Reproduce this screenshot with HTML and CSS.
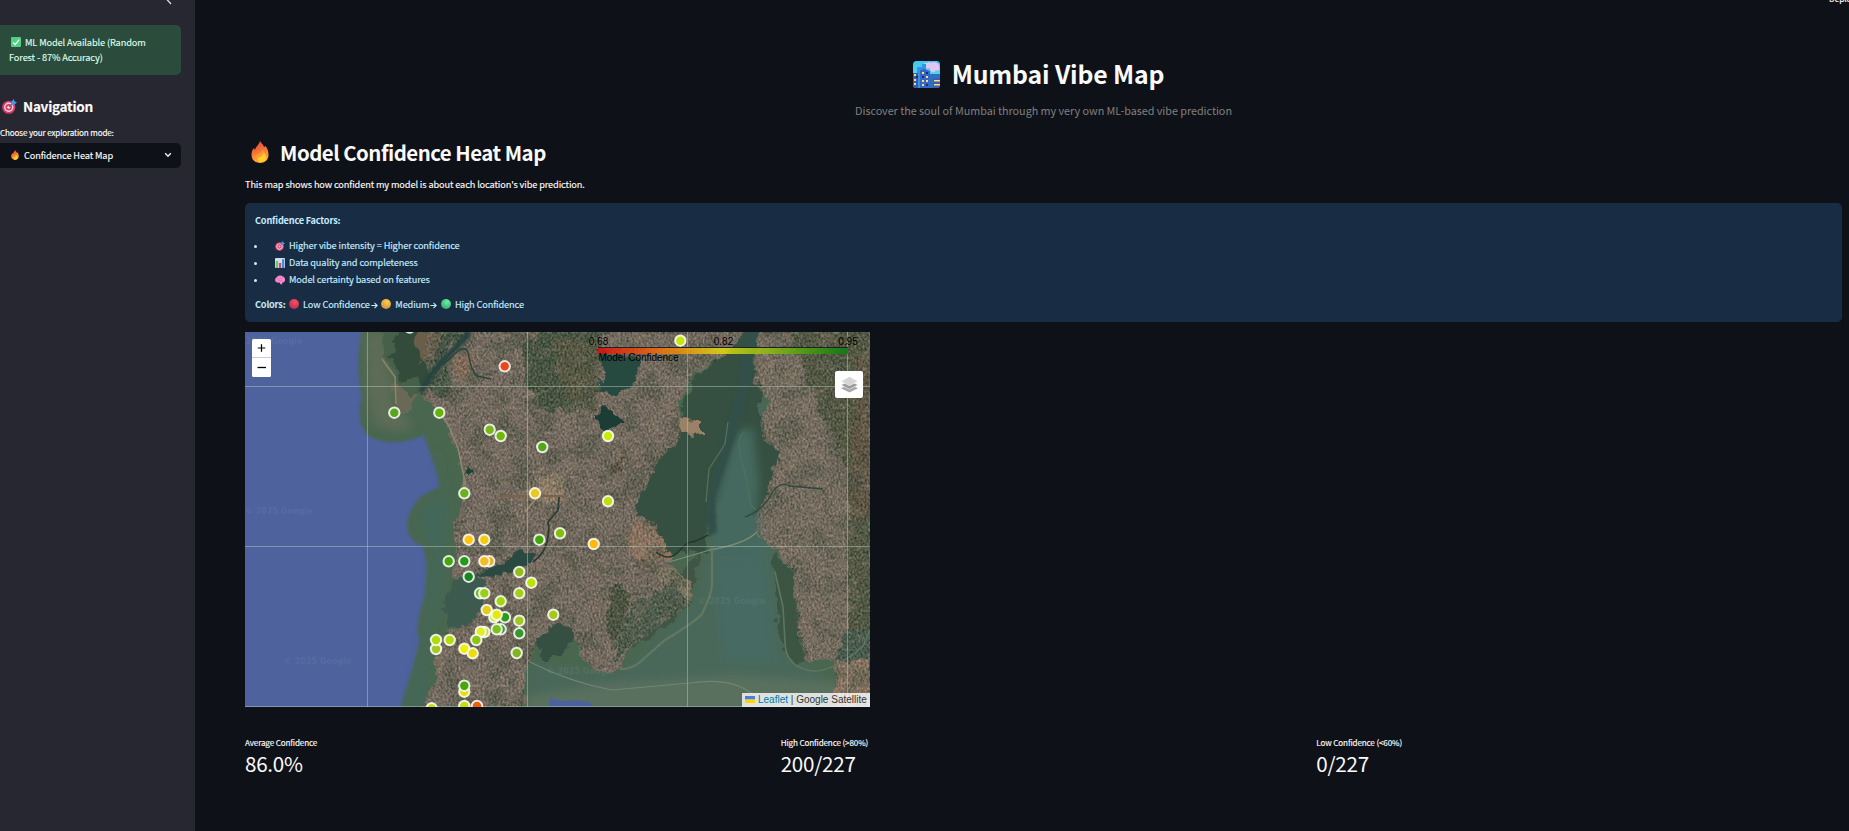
FILE: index.html
```html
<!DOCTYPE html>
<html lang="en">
<head>
<meta charset="utf-8">
<title>Mumbai Vibe Map</title>
<link rel="stylesheet" href="styles.css">
</head>
<body>
<svg class="defs" width="0" height="0" aria-hidden="true">
  <defs>
    <linearGradient id="flameFill" x1="0" y1="0" x2=".3" y2="1"><stop offset="0" stop-color="#d9473d"/><stop offset=".45" stop-color="#f2693a"/><stop offset="1" stop-color="#ffb033"/></linearGradient>
    <linearGradient id="skyFill" x1="0" y1="0" x2="0" y2="1"><stop offset="0" stop-color="#3fc8ee"/><stop offset="1" stop-color="#7ad6f5"/></linearGradient>
    <radialGradient id="redBall" cx=".6" cy=".3" r=".8"><stop offset="0" stop-color="#f5506a"/><stop offset="1" stop-color="#b82a45"/></radialGradient>
    <radialGradient id="yellowBall" cx=".6" cy=".3" r=".8"><stop offset="0" stop-color="#ffd04a"/><stop offset="1" stop-color="#c88a3c"/></radialGradient>
    <radialGradient id="greenBall" cx=".6" cy=".3" r=".8"><stop offset="0" stop-color="#6af0a0"/><stop offset="1" stop-color="#35a070"/></radialGradient>
    <symbol id="flame" viewBox="0 0 18 22"><path d="M9 0c1 2 3 3 4 6l1.500-1c2.500 3 3 6 3 9 0 5-4 8-8.500 8S.5 19 .5 14c0-3 .5-5 2.500-7l1 2C5 5 8 4 9 0z" fill="url(#flameFill)"/><path d="M12 8c0 3 3 4 3 8 0 4-3 5-6 5s-5-2-5-4c0-4 7-4 8-9z" fill="#ff9a2e"/><path d="M13 11c0 2 2 3 2 5.500 0 3-2.500 4.500-5 4.500s-4-1.500-3.500-3.500C8 16 12 15 13 11z" fill="#ffcf2f"/></symbol>
    <symbol id="target" viewBox="0 0 16 16"><circle cx="7.2" cy="8.8" r="7" fill="#d93a66"/><circle cx="7.2" cy="8.8" r="5" fill="#f3d9e4"/><circle cx="7.2" cy="8.8" r="3.5" fill="#d93a66"/><circle cx="7.2" cy="8.8" r="1.7" fill="#f3d9e4"/><path d="M7.5 8.5L12 4" stroke="#3b6ea8" stroke-width="1.1"/><path d="M10 5.8V3l2.4-3 1 2.3L16 3.600 13 6z" fill="#3f9ae8"/></symbol>
    <symbol id="chart" viewBox="0 0 10 10"><rect width="10" height="10" rx="1" fill="#d8dce8"/><rect x=".8" y="3" width="2.3" height="7" fill="#6cc46a"/><rect x="3.900" y="5" width="2.300" height="5" fill="#d9407a"/><rect x="7" y="1.200" width="2.300" height="8.800" fill="#3b8de0"/></symbol>
    <symbol id="brain" viewBox="0 0 10 9"><path d="M2 1.500C3.500-.2 6.500-.3 8 1c1.700.8 2.300 2.600 2 4-.3 1.500-1.500 2-2.500 2L6.800 9 5.200 8.500 4.800 7C3 7.500.8 7 .3 5.500-.2 4 .3 2.300 2 1.500z" fill="#f986c8"/><path d="M2 3.500c1-.6 2 .3 2.500 0M5 2c1 0 1.500.7 2.500.5M3 5.500c1.300-.8 2.500.4 4-.6" stroke="#e062b0" stroke-width=".5" fill="none"/></symbol>
    <symbol id="layers" viewBox="0 0 16 16"><path d="M8 7.500l8 4-8 4-8-4z" fill="#a8a8a8"/><path d="M8 4.500l8 4-8 4-8-4z" fill="#9a9a9a" stroke="#fff" stroke-width=".5"/><path d="M8 .5l8 4.500-8 4.200L0 5z" fill="#d6d6d6" stroke="#fff" stroke-width=".5"/></symbol>
  </defs>
</svg>
<div class="app">
  <aside class="sidebar">
    <svg class="collapse" viewBox="0 0 8 8"><path d="M1.500 -1L6 4" /></svg>
    <div class="status"><svg class="check" viewBox="0 0 10 10"><rect width="10" height="10" rx="1" fill="#4fd083"/><path d="M2 5.300L4.200 7.500 8.200 2.700" fill="none" stroke="#fff" stroke-width="1.200"/></svg>ML Model Available (Random<br>Forest - 87% Accuracy)</div>
    <h3 class="nav-title"><svg class="nav-icon"><use href="#target"/></svg>Navigation</h3>
    <label class="mode-label">Choose your exploration mode:</label>
    <div class="select"><svg class="select-flame"><use href="#flame"/></svg><span>Confidence Heat Map</span><svg class="caret" viewBox="0 0 8 6"><path d="M1.200 1.200L4 4.200 6.800 1.200"/></svg></div>
  </aside>
  <main class="content">
    <div class="deploy">Deploy</div>
    <h1 class="title"><svg class="city" viewBox="0 0 27 27"><defs><clipPath id="cityClip"><rect width="27" height="27" rx="3.500"/></clipPath></defs><g clip-path="url(#cityClip)"><rect width="27" height="27" fill="url(#skyFill)"/><path d="M11 4a2 2 0 0 1 3-2 3 3 0 0 1 4 0 5 4 0 0 1 8 4 2 2 0 0 1-3 3 3 3 0 0 1-6-2 4 3 0 0 1-6-3z" fill="#dcc8f2"/><path d="M4 6h5V3h4v24H4z" fill="#2e97e0"/><path d="M16 13h11v14H16z" fill="#2c72b8"/><path d="M0 12h5v15H0z" fill="#3d55b8"/><path d="M7 9l4-1 6 2v17H7z" fill="#3566cc"/><path d="M20 17h7v10h-7z" fill="#4159be"/><path d="M1 13h2v2H1zM1 18h2v2H1zM1 22h2v2H1zM9 11h2v2H9zM13 15h2v2h-2zM9 19h2v2H9zM13 19h2v2h-2zM9 23h2v2H9zM21 19h6v1.500h-6zM21 23h6v1.500h-6z" fill="#f8df6e"/><path d="M13 11h2v2h-2zM9 15h2v2H9zM13 23h2v2h-2zM3 15h2v2H3z" fill="#1e2d62"/></g></svg>Mumbai Vibe Map</h1>
    <p class="subtitle">Discover the soul of Mumbai through my very own ML-based vibe prediction</p>
    <h2 class="heading"><svg class="heading-icon"><use href="#flame"/></svg>Model Confidence Heat Map</h2>
    <p class="intro">This map shows how confident my model is about each location's vibe prediction.</p>
    <section class="info">
      <p><b>Confidence Factors:</b></p>
      <ul>
        <li><svg class="emoji"><use href="#target"/></svg>Higher vibe intensity = Higher confidence</li>
        <li><svg class="emoji"><use href="#chart"/></svg>Data quality and completeness</li>
        <li><svg class="emoji"><use href="#brain"/></svg>Model certainty based on features</li>
      </ul>
      <p class="scale"><b>Colors:</b><svg class="ball" viewBox="0 0 10 10"><circle cx="5" cy="5" r="5" fill="url(#redBall)"/></svg><span>Low Confidence</span><svg class="arrow" viewBox="0 0 6 6"><path d="M.3 3H5.300M3 .8L5.300 3 3 5.200"/></svg><svg class="ball" viewBox="0 0 10 10"><circle cx="5" cy="5" r="5" fill="url(#yellowBall)"/></svg><span>Medium</span><svg class="arrow" viewBox="0 0 6 6"><path d="M.3 3H5.300M3 .8L5.300 3 3 5.200"/></svg><svg class="ball" viewBox="0 0 10 10"><circle cx="5" cy="5" r="5" fill="url(#greenBall)"/></svg><span>High Confidence</span></p>
    </section>
    <div class="map">
      <svg class="tiles" viewBox="0 0 625 375">
        <defs>
          <filter id="rough" x="-5%" y="-5%" width="110%" height="110%"><feTurbulence type="fractalNoise" baseFrequency=".09" numOctaves="4" seed="4"/><feDisplacementMap in="SourceGraphic" scale="14" xChannelSelector="R" yChannelSelector="G"/><feGaussianBlur stdDeviation=".7"/></filter>
          <filter id="soft"><feGaussianBlur stdDeviation="1.500"/></filter>
          <filter id="softer" x="-30%" y="-30%" width="160%" height="160%"><feGaussianBlur stdDeviation="5"/></filter>
          <filter id="speckle" x="0" y="0" width="100%" height="100%" color-interpolation-filters="sRGB"><feTurbulence type="fractalNoise" baseFrequency=".5 .36" numOctaves="4" seed="8"/><feColorMatrix values="1 .6 0 0 -.36  1 .6 0 0 -.38  1 .6 0 0 -.43  0 0 0 0 .33"/><feComposite in2="SourceGraphic" operator="in"/></filter>
          <filter id="patches" x="0" y="0" width="100%" height="100%" color-interpolation-filters="sRGB"><feTurbulence type="fractalNoise" baseFrequency=".045" numOctaves="6" seed="21"/><feColorMatrix values="0 0 0 0 .23  0 0 0 0 .29  0 0 0 0 .22  5 0 0 0 -2.3"/><feComposite in2="SourceGraphic" operator="in"/></filter>
          <filter id="pale" x="0" y="0" width="100%" height="100%" color-interpolation-filters="sRGB"><feTurbulence type="fractalNoise" baseFrequency=".07" numOctaves="5" seed="5"/><feColorMatrix values="0 0 0 0 .62  0 0 0 0 .54  0 0 0 0 .46  0 6 0 0 -3.2"/><feComposite in2="SourceGraphic" operator="in"/></filter>
          <linearGradient id="legend"><stop offset="0" stop-color="#d80c0c"/><stop offset=".25" stop-color="#f0700a"/><stop offset=".5" stop-color="#e0dc10"/><stop offset=".75" stop-color="#70b010"/><stop offset="1" stop-color="#087c10"/></linearGradient>
          <path id="mainland" d="M184 0L178 20 184 45 173 61 190 75 203 96 212 116 219 145 219 170 214 185 208 190 212 222 208 250 225 242 240 250 239 268 229 288 214 299 206 296 192 309 189 331 194 345 187 358 176 375H278L281 338 293 308 305 300 328 302 338 328 362 341 376 334 385 316 420 290 446 272 444 252 424 234 410 190 388 183 396 162 414 128 436 106 433 70 450 40 480 24 500 0Z"/>
          <path id="east" d="M515 0H625V375H592L590 328 562 328 552 305 550 243 535 220 512 204 509 188 522 162 528 140 535 120 518 108 515 90 525 70 510 52 508 28Z"/>
        </defs>
        <rect width="625" height="375" fill="#4e629e"/>
        <path filter="url(#soft)" fill="#48664f" d="M118 -5C111 20 113 50 117 66 112 80 115 95 122 103 138 113 160 112 178 103L182 112 193 145 194 156C178 160 164 172 162 193 162 205 170 211 179 215L182 235 180 262 175 280 172 300 175 307 168 335 154 380H630V-5Z"/>
        <g filter="url(#softer)">
          <path d="M120 0H140L150 75 170 95 150 100 128 92 122 60Z" fill="#5d6c57"/>
          <path d="M188 115C200 135 200 165 202 190L199 230 193 275 184 300 180 375H165L178 310 186 260 190 215 178 205 175 180 202 158Z" fill="#43675a"/>
          <path d="M495 30L535 100 525 180 530 215 560 330 590 360 500 375H285V330L370 345 448 270 468 205Z" fill="#4a685a"/>
          <path d="M492 110L475 170 468 230 478 330 530 330 520 230 520 190 512 150 508 100Z" fill="#466b62"/>
          <path d="M280 365L360 352 490 344 590 350 625 380H280Z" fill="#5a705f"/>
        </g>
        <g filter="url(#rough)">
          <path d="M146 50L158 52 170 60 168 75 162 84 154 84Z" fill="#6b6757"/>
          <path d="M137 -5L138 22 149 40 156 56 166 66 175 60 186 40V-5Z" fill="#47604a"/>
          <use href="#mainland" fill="#766b60"/><use href="#east" fill="#776c61"/>
          <path d="M150 0H226L209 12 198 32 208 50 204 66 180 58 173 48 155 50 146 22Z" fill="#304c3b"/>
          <path d="M174 0H196L190 22 180 32 170 15Z" fill="#6a5d48"/>
          <path d="M277 15L300 0 360 0 350 20 355 60 330 80 300 78 283 60Z" fill="#344a35"/>
          <path d="M305 5L356 10 350 80 322 70Z" fill="#4b5038"/>
          <path d="M388 183L414 126 434 106 438 70 455 40 480 24 500 0H515L508 28 515 65 515 100 535 118 528 140 515 182 500 180 493 150 484 160 466 185 463 220 420 222 410 192Z" fill="#364f41"/>
          <path d="M455 220L446 272 420 294 385 316 366 335 374 300 386 275 420 255Z" fill="#3f5445"/>
          <path d="M369 250L386 260 379 290 368 317 360 290Z" fill="#3d4a35"/>
          <path d="M546 0H625V375H608L603 310 602 140 580 90 568 65 562 45Z" fill="#455039"/>
          <path d="M529 220L552 240 553 300 565 325 550 332 534 310Z" fill="#3a5442"/>
          <path d="M602 300L625 295V330L590 328Z" fill="#345244"/>
          <path d="M592 329L625 327V375H590Z" fill="#927763"/>
          <path d="M388 192L404 190 418 205 425 227 395 235 382 213Z" fill="#94755f"/>
          <path d="M412 240L430 236 444 250 450 262 444 272 432 256Z" fill="#7c7661"/>
          <path d="M433 88L457 89 457 101 441 102Z" fill="#9b8167"/>
          <path d="M207 27L224 20 230 35 220 46 212 42Z" fill="#8b6b55"/>
          <path d="M277 163L296 150 310 138 318 150 315 170 300 172Z" fill="#97846b"/>
          <path d="M378 120L384 115 372 140 362 138Z" fill="#52483a"/>
          <path d="M610 25L625 30V170L613 200 604 180Z" fill="#574a38"/>
        </g>
        <use href="#mainland" fill="#fff" filter="url(#patches)" opacity=".5"/>
        <use href="#east" fill="#fff" filter="url(#patches)" opacity=".42"/>
        <use href="#mainland" fill="#fff" filter="url(#pale)" opacity=".26"/>
        <use href="#east" fill="#fff" filter="url(#pale)" opacity=".26"/>
        <use href="#mainland" fill="#fff" filter="url(#speckle)"/>
        <use href="#east" fill="#fff" filter="url(#speckle)"/>
        <g filter="url(#rough)">
          <path d="M355 22L397 24 392 48 380 60 365 64 354 58 358 40Z" fill="#28483f"/>
          <path d="M349 82L360 76 370 82 380 90 370 98 356 96Z" fill="#1e3d34"/>
          <path d="M223 135L230 140 228 145 223 143Z" fill="#1d4232"/>
          <path d="M206 250L230 242 240 250 239 268 229 288 214 298 206 292 198 278Z" fill="#3d5a50"/>
          <path d="M228 243L262 230 275 218 293 222 278 236 250 245Z" fill="#2b4940"/>
          <path d="M293 309L308 294 322 292 330 306 320 318 300 330Z" fill="#354f43"/>
        </g>
        <path filter="url(#softer)" d="M490 100L508 95 514 150 512 185 514 225H467L470 168Z" fill="#45695f"/>
        <path filter="url(#soft)" d="M500 0H512L505 50 494 95 480 135 470 165 472 200 463 205 464 160 482 95 494 50Z" fill="#304f4a"/>
        <g fill="none" filter="url(#soft)">
          <path d="M225 0L188 40 176 60" stroke="#26423c" stroke-width="6"/>
        </g>
        <g fill="none" stroke-linejoin="round">
          <path d="M198 33L213 19Q222 12 224 25T232 44L246 47" stroke="#28453c" stroke-width="1.500"/>
          <path d="M288 230Q299 222 302 210T303 190Q309 183 313 178L314 165" stroke="#2c3b33" stroke-width="1.800"/>
          <path d="M411 220Q424 230 433 220T446 210 463 203" stroke="#24372f" stroke-width="1.500"/>
          <path d="M194 79L204 94 213 116 219 145 219 170" stroke="#8d8870" stroke-width="1.500"/>
          <path d="M137 27L150 45 151 72" stroke="#8f8469" stroke-width="1.500"/>
          <path d="M254 164L318 164" stroke="#80604a" stroke-width="2"/><path d="M280 180L302 153" stroke="#a58a70" stroke-width="1.500"/>
          <path d="M424 230L465 218Q500 212 512 200" stroke="#7e8c78" stroke-width="1.300"/>
          <path d="M375 337Q385 338 395 330L420 308Q450 290 457 282 467 262 467 252V215" stroke="#647761" stroke-width="2.200"/>
          <path d="M285 330Q324 350 367 358L445 351Q485 345 506 361L540 375" stroke="#70866f" stroke-width="1.200"/>
          <path d="M530 240L538 275 540 310Q540 332 562 338T618 314L625 298" stroke="#60755f" stroke-width="1.600"/>
          <path d="M483 90L480 112 464 137 461 170" stroke="#55705e" stroke-width="1.300"/>
          <path d="M500 100Q490 105 497 130T505 170Q512 185 520 172" stroke="#527059" stroke-width="1.200"/>
          <path d="M500 185Q518 178 526 163T545 154L578 157" stroke="#30463d" stroke-width="1.300"/>
        </g>
        <path d="M305 366L318 369 330 368 345 370 348 375H304Z" fill="#4d629a"/>
        <g stroke="#b4c8ba" stroke-opacity=".5" stroke-width="1"><path d="M122.500 0V375M282.500 0V375M442.500 0V375M602.500 0V375M0 54.500H625M0 214.500H625M0 374.500H625" fill="none"/></g>
        <g class="watermark"><text x="-10" y="12">© 2025 Google</text><text x="0" y="182">© 2025 Google</text><text x="39" y="332">© 2025 Google</text><text x="453" y="272">© 2025 Google</text><text x="302" y="342">© 2025 Google</text></g>
        <g class="legend-text">
          <rect x="353" y="16" width="250" height="6" fill="url(#legend)" opacity=".85"/><path d="M353 15.500H603" stroke="#222" stroke-width="1"/>
          <text x="353.500" y="13" text-anchor="middle">0.68</text><text x="478.500" y="13" text-anchor="middle">0.82</text><text x="603" y="13" text-anchor="middle">0.95</text><text x="353.500" y="29" textLength="80">Model Confidence</text>
        </g>
        <g class="markers">
          <circle cx="164.700" cy="-4.500" r="5.300" fill="#b4d814"/><circle cx="259.700" cy="34.300" r="5.300" fill="#e8481c"/><circle cx="149.300" cy="80.700" r="5.300" fill="#58a51c"/><circle cx="194.300" cy="80.700" r="5.300" fill="#63b30c"/><circle cx="244.700" cy="97.700" r="5.300" fill="#7bb51c"/><circle cx="255.700" cy="104" r="5.300" fill="#72b80c"/><circle cx="297.300" cy="115" r="5.300" fill="#55a51a"/><circle cx="219.300" cy="161.300" r="5.300" fill="#6cb01c"/><circle cx="290" cy="161.300" r="5.300" fill="#eac81c"/><circle cx="435.300" cy="8.700" r="5.300" fill="#c4e808"/><circle cx="363" cy="104" r="5.300" fill="#c8ec08"/><circle cx="363" cy="169.300" r="5.300" fill="#bfe00c"/>
          <circle cx="223.700" cy="207.700" r="5.300" fill="#ffc40c"/><circle cx="239.300" cy="207.700" r="5.300" fill="#f0cc10"/><circle cx="294.300" cy="207.700" r="5.300" fill="#45a50c"/><circle cx="315" cy="201.300" r="5.300" fill="#82bf0c"/><circle cx="348.700" cy="212" r="5.300" fill="#ffb80c"/><circle cx="203.700" cy="229.300" r="5.300" fill="#45a50c"/><circle cx="219.300" cy="229.300" r="5.300" fill="#239a18"/><circle cx="244.300" cy="229.300" r="5.300" fill="#f0a81c"/><circle cx="239.300" cy="229.300" r="5.300" fill="#f4bc1c"/><circle cx="223.700" cy="244.700" r="5.300" fill="#188520"/><circle cx="274.300" cy="240" r="5.300" fill="#93bc1c"/><circle cx="286.300" cy="250.700" r="5.300" fill="#bbe20c"/><circle cx="235" cy="261.300" r="5.300" fill="#70b830"/><circle cx="239.300" cy="261.300" r="5.300" fill="#98cf18"/><circle cx="274.300" cy="261.300" r="5.300" fill="#a4ce1c"/><circle cx="255.700" cy="269.300" r="5.300" fill="#a0d80c"/><circle cx="241.700" cy="278" r="5.300" fill="#e4cc1c"/><circle cx="249.300" cy="285.300" r="5.300" fill="#c8e848"/><circle cx="260" cy="285.300" r="5.300" fill="#30981c"/><circle cx="251.700" cy="282.700" r="5.300" fill="#e4e80c"/><circle cx="274.300" cy="288.700" r="5.300" fill="#a0c824"/><circle cx="308.300" cy="282.700" r="5.300" fill="#a4c81c"/><circle cx="255.700" cy="297.300" r="5.300" fill="#309830"/><circle cx="251.700" cy="297.300" r="5.300" fill="#7cc01c"/><circle cx="239.300" cy="300" r="5.300" fill="#c0d830"/><circle cx="235.700" cy="299.700" r="5.300" fill="#e0f020"/><circle cx="274.300" cy="301.300" r="5.300" fill="#38982c"/><circle cx="191" cy="317" r="5.300" fill="#a4c824"/><circle cx="191" cy="308" r="5.300" fill="#b0dc0c"/><circle cx="204.700" cy="308" r="5.300" fill="#b4dc0c"/><circle cx="231.300" cy="308" r="5.300" fill="#88c814"/><circle cx="219.300" cy="316.700" r="5.300" fill="#ecf00c"/><circle cx="227.700" cy="321.300" r="5.300" fill="#ecdc0c"/><circle cx="271.700" cy="321" r="5.300" fill="#80b420"/><circle cx="219.300" cy="359.700" r="5.300" fill="#e4e010"/><circle cx="219.300" cy="353.700" r="5.300" fill="#48a50c"/><circle cx="186.700" cy="376.300" r="5.300" fill="#c8e010"/><circle cx="219.300" cy="374" r="5.300" fill="#c0e010"/><circle cx="232" cy="374" r="5.300" fill="#f05c0c"/>
        </g>
      </svg>
      <div class="zoom"><svg viewBox="0 0 19 19"><path d="M9.500 5.500V13.500M5.500 9.500H13.500"/></svg><svg viewBox="0 0 19 19"><path d="M5.500 9.500H14"/></svg></div>
      <div class="layers"><svg><use href="#layers"/></svg></div>
      <div class="credit"><svg viewBox="0 0 10 7"><rect width="10" height="3.500" fill="#4c7be1"/><rect y="3.500" width="10" height="3.500" fill="#ffd500"/></svg><a>Leaflet</a> | Google Satellite</div>
    </div>
    <section class="metrics">
      <div><div class="metric-label">Average Confidence</div><div class="metric-value">86.0%</div></div>
      <div><div class="metric-label">High Confidence (&gt;80%)</div><div class="metric-value">200/227</div></div>
      <div><div class="metric-label">Low Confidence (&lt;60%)</div><div class="metric-value">0/227</div></div>
    </section>
  </main>
</div>
</body>
</html>
```

FILE: styles.css
```css
* { box-sizing: border-box; margin: 0; padding: 0; }
body { background: #0e1117; color: #fafafa; font-family: "Noto Sans CJK SC", "Noto Sans", sans-serif; font-size: 9.2px; letter-spacing: -.11px; -webkit-text-stroke: .15px; overflow: hidden; }
.defs { position: absolute; }
svg { flex: none; }
.app { display: flex; height: 831px; }
.sidebar { width: 195px; background: #262730; padding: 25px 14px 0 0; position: relative; flex: none; }
.collapse { position: absolute; left: 165px; top: 0; width: 8px; height: 8px; fill: none; stroke: #e8e8ea; stroke-width: 1.2; }
.status { height: 50px; background: #2b4c3c; color: #dffde9; border-radius: 0 5px 5px 0; padding: 10px 9px; line-height: 15px; }
.check { width: 10px; height: 10px; margin: 0 4px 0 2px; vertical-align: -1px; }
.nav-title { display: flex; align-items: center; font-size: 13.6px; letter-spacing: -.3px; font-weight: 700; line-height: 24px; margin-top: 19px; }
.nav-icon { width: 15px; height: 15px; margin: 0 6px 0 2px; }
.mode-label { display: block; font-size: 8.1px; letter-spacing: -.15px; line-height: 14px; margin-top: 8px; }
.select { display: flex; align-items: center; height: 25px; margin-top: 3px; background: #0e1117; border-radius: 0 5px 5px 0; padding: 0 9px 1px 11px; }
.select-flame { width: 8px; height: 10px; margin-right: 5px; }
.caret { width: 8px; height: 6px; margin-left: auto; fill: none; stroke: #f0f0f0; stroke-width: 1.4; }
.content { flex: 1; padding: 53px 7px 0 50px; position: relative; }
.deploy { position: absolute; top: -8px; left: 1634px; width: 20px; overflow: hidden; font-size: 8.4px; line-height: 12px; }
.title { display: flex; justify-content: center; align-items: center; padding-right: 10px; font-size: 24.8px; letter-spacing: -.15px; line-height: 40px; -webkit-text-stroke: 0; }
.city { width: 27px; height: 27px; margin: 2px 12px 0 0; }
.subtitle { margin-top: 7px; text-align: center; color: #808080; font-size: 10.8px; letter-spacing: -.03px; line-height: 20px; -webkit-text-stroke: 0; }
.heading { display: flex; align-items: center; margin-top: 17px; font-size: 20.4px; letter-spacing: -.5px; line-height: 30px; -webkit-text-stroke: 0; }
.heading-icon { width: 18px; height: 22px; margin: 0 11px 0 6px; }
.intro { margin-top: 9px; line-height: 16px; }
.info { margin-top: 11px; height: 119px; background: #182d43; border-radius: 5px; padding: 9px 10px; color: #c7ebff; line-height: 16px; }
.info b { letter-spacing: -.2px; -webkit-text-stroke: 0; }
.info ul { list-style: none; margin: 9px 0 8px; }
.info li { display: flex; align-items: center; line-height: 17px; }
.info li::before { content: ""; width: 3px; height: 3px; border-radius: 50%; background: #c7ebff; margin: 1px 18px 0 -1px; }
.emoji { width: 10px; height: 10px; margin-right: 4px; }
.scale { display: flex; align-items: center; }
.ball { width: 10px; height: 10px; margin: 0 4px 0 3.5px; }
.arrow { width: 7px; height: 7px; margin: 2px 0 0 1px; fill: none; stroke: #c7ebff; stroke-width: .9; }
.map { position: relative; width: 625px; height: 375px; margin-top: 10px; overflow: hidden; font-family: "Liberation Sans", Arial, sans-serif; letter-spacing: 0; -webkit-text-stroke: 0; }
.tiles { display: block; width: 625px; height: 375px; }
.watermark { font: bold 8px "DejaVu Sans", sans-serif; fill: #9cb0c8; fill-opacity: .15; }
.legend-text { font-size: 10px; fill: #000; }
.markers circle { stroke: #fff; stroke-width: 2; stroke-opacity: .85; r: 5.2px; }
.zoom { position: absolute; left: 7px; top: 7px; width: 19px; height: 38px; background: #fff; border-radius: 1.5px; display: flex; flex-direction: column; }
.zoom svg { width: 19px; height: 19px; stroke: #000; stroke-width: 1.3; }
.zoom svg:first-child { border-bottom: 1px solid #ccc; }
.layers { position: absolute; left: 590px; top: 39px; width: 28px; height: 27px; background: #fff; border-radius: 2px; display: grid; place-items: center; }
.layers svg { width: 17px; height: 17px; }
.credit { position: absolute; right: 0; bottom: 0; width: 128px; height: 14px; padding-left: 3px; background: rgba(255,255,255,.8); color: #333; font-size: 10px; line-height: 14px; white-space: nowrap; }
.credit svg { width: 10px; height: 7px; margin-right: 3px; }
.credit a { color: #0078a8; }
.metrics { display: grid; grid-template-columns: repeat(3, 1fr); gap: 10px; margin-top: 29px; }
.metric-label { font-size: 8.1px; letter-spacing: -.13px; line-height: 14px; }
.metric-value { font-size: 20.6px; letter-spacing: -.25px; line-height: 28px; margin-top: -1px; -webkit-text-stroke: 0; }
```
